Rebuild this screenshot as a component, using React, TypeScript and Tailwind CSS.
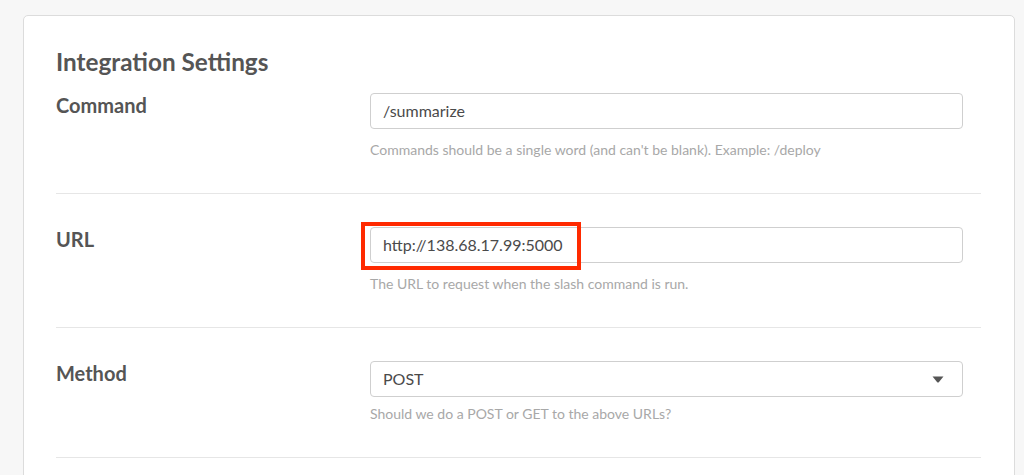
import React from "react";

const font = { fontFamily: "Lato, 'Open Sans', sans-serif" };

function Row({
  label,
  children,
  help,
  first,
  helpMt,
}: {
  label: string;
  children: React.ReactNode;
  help: string;
  first?: boolean;
  helpMt: string;
}) {
  return (
    <div className={`flex border-b border-[#e6e6e6] pb-[35px] ${first ? "pt-[17px]" : "pt-[33px]"}`}>
      <div className="w-[314px] shrink-0 text-[20px] leading-[24px] font-bold text-[#555]">{label}</div>
      <div className="w-[593px]">
        {children}
        <div className={`${helpMt} text-[14px] leading-[17px] text-[#a8a8a8]`}>{help}</div>
      </div>
    </div>
  );
}

export default function App() {
  return (
    <div className="min-h-[475px] w-[1024px] overflow-hidden bg-[#f7f7f7] pt-[15px] pl-[23px]" style={font}>
      <div className="h-[480px] w-[992px] rounded-[5px] border border-[#dcdcdc] bg-white px-[32px] pt-[31px]">
        <h2 className="text-[24.3px] leading-[29px] font-bold text-[#555]">Integration Settings</h2>
        <div className="w-[925px]">
          <Row label="Command" first help="Commands should be a single word (and can't be blank). Example: /deploy" helpMt="mt-[12px]">
            <div className="flex h-[36px] items-center rounded-[4px] border border-[#cfcfcf] px-[12px] text-[16px] text-[#4a4a4a]">
              /summarize
            </div>
          </Row>
          <Row label="URL" help="The URL to request when the slash command is run." helpMt="mt-[12px]">
            <div className="relative">
              <div className="flex h-[36px] items-center rounded-[4px] border border-[#cfcfcf] px-[12px] text-[16px] text-[#4a4a4a]">
                http://138.68.17.99:5000
              </div>
              <div className="pointer-events-none absolute left-[-9px] top-[-5px] h-[48px] w-[220px] border-[4px] border-[#ff2a00]" />
            </div>
          </Row>
          <Row label="Method" help="Should we do a POST or GET to the above URLs?" helpMt="mt-[8px]">
            <div className="flex h-[36px] items-center justify-between rounded-[4px] border border-[#cfcfcf] pl-[12px] pr-[18px] text-[16px] text-[#4a4a4a]">
              <span>POST</span>
              <svg width="12" height="7" viewBox="0 0 12 7">
                <path d="M0.5 0.5 L11.5 0.5 L7 6 Q6 7 5 6 Z" fill="#555" />
              </svg>
            </div>
          </Row>
        </div>
      </div>
    </div>
  );
}
